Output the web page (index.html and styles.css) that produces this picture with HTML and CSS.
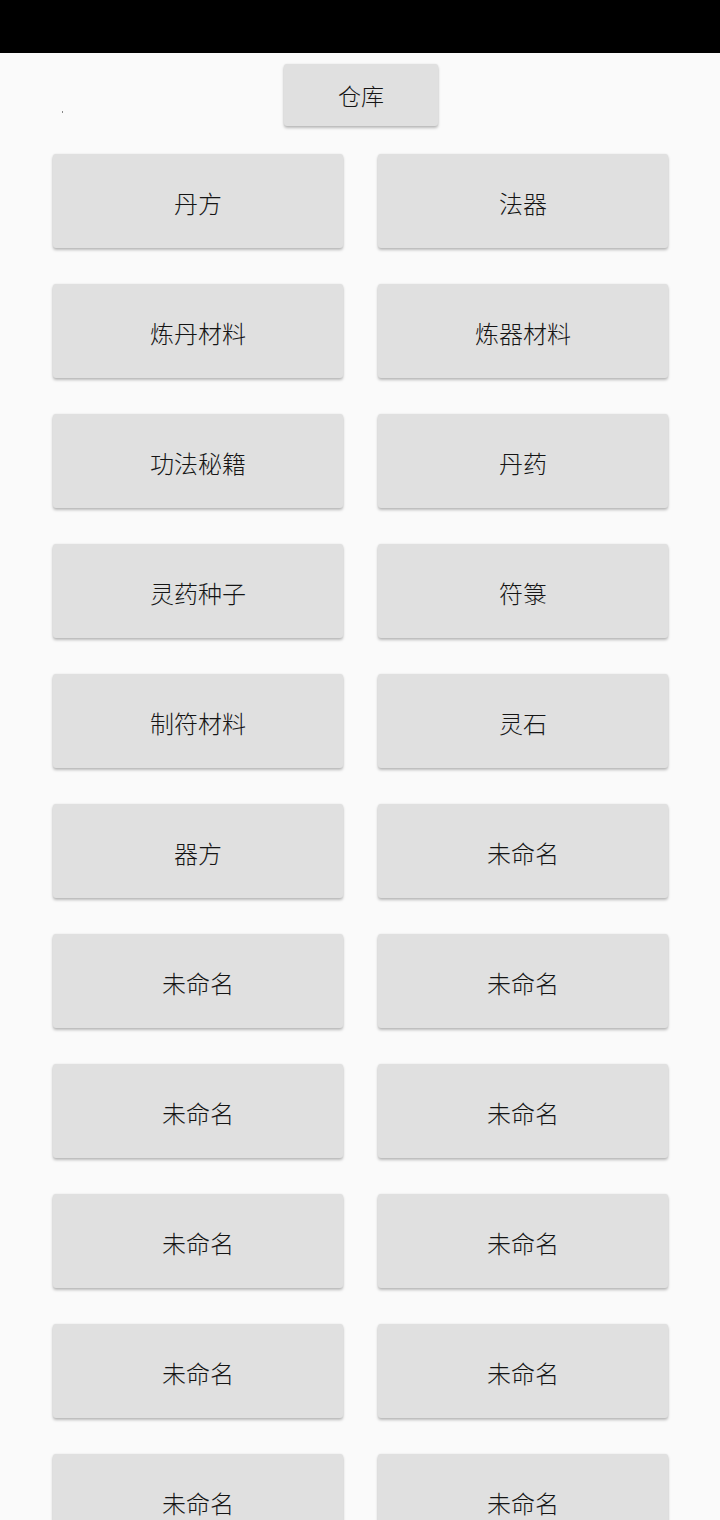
FILE: index.html
```html
<!DOCTYPE html>
<html lang="zh">
<head>
<meta charset="utf-8">
<title>仓库</title>
<link rel="stylesheet" href="styles.css">
</head>
<body>
<div class="statusbar"></div>
<main class="page">
  <div class="top">
    <span class="dot"></span>
    <button class="btn btn-top">仓库</button>
  </div>
  <div class="grid">
    <button class="btn">丹方</button>
    <button class="btn">法器</button>
    <button class="btn">炼丹材料</button>
    <button class="btn">炼器材料</button>
    <button class="btn">功法秘籍</button>
    <button class="btn">丹药</button>
    <button class="btn">灵药种子</button>
    <button class="btn">符箓</button>
    <button class="btn">制符材料</button>
    <button class="btn">灵石</button>
    <button class="btn">器方</button>
    <button class="btn">未命名</button>
    <button class="btn">未命名</button>
    <button class="btn">未命名</button>
    <button class="btn">未命名</button>
    <button class="btn">未命名</button>
    <button class="btn">未命名</button>
    <button class="btn">未命名</button>
    <button class="btn">未命名</button>
    <button class="btn">未命名</button>
    <button class="btn">未命名</button>
    <button class="btn">未命名</button>
  </div>
</main>
</body>
</html>
```
FILE: styles.css
```css
html, body {
  margin: 0;
  padding: 0;
  background: #fafafa;
  font-family: "Noto Sans CJK SC", "Noto Sans", sans-serif;
  overflow: hidden;
}
.statusbar {
  height: 53px;
  background: #000;
}
.page {
  padding: 11px 52px 0 53px;
}
.top {
  position: relative;
  display: flex;
  justify-content: center;
  height: 64px;
  padding-left: 1px;
}
.dot {
  position: absolute;
  left: 9px;
  top: 47px;
  width: 1px;
  height: 2px;
  background: #888;
}
.btn {
  border: none;
  margin: 0;
  padding: 0;
  background: #e0e0e0;
  border-radius: 3px;
  box-shadow: 0 2px 3px rgba(0,0,0,0.26), 0 0 2px rgba(0,0,0,0.08);
  color: #151515;
  font-family: "Noto Sans CJK SC", "Noto Sans", sans-serif;
  font-weight: 300;
  font-size: 24px;
  height: 94px;
  padding-top: 2px;
}
.btn-top {
  width: 154px;
  height: 62px;
  font-size: 23px;
  padding-top: 0;
}
.grid {
  display: grid;
  grid-template-columns: 290px 290px;
  column-gap: 35px;
  row-gap: 36px;
  margin-top: 26px;
}
```
